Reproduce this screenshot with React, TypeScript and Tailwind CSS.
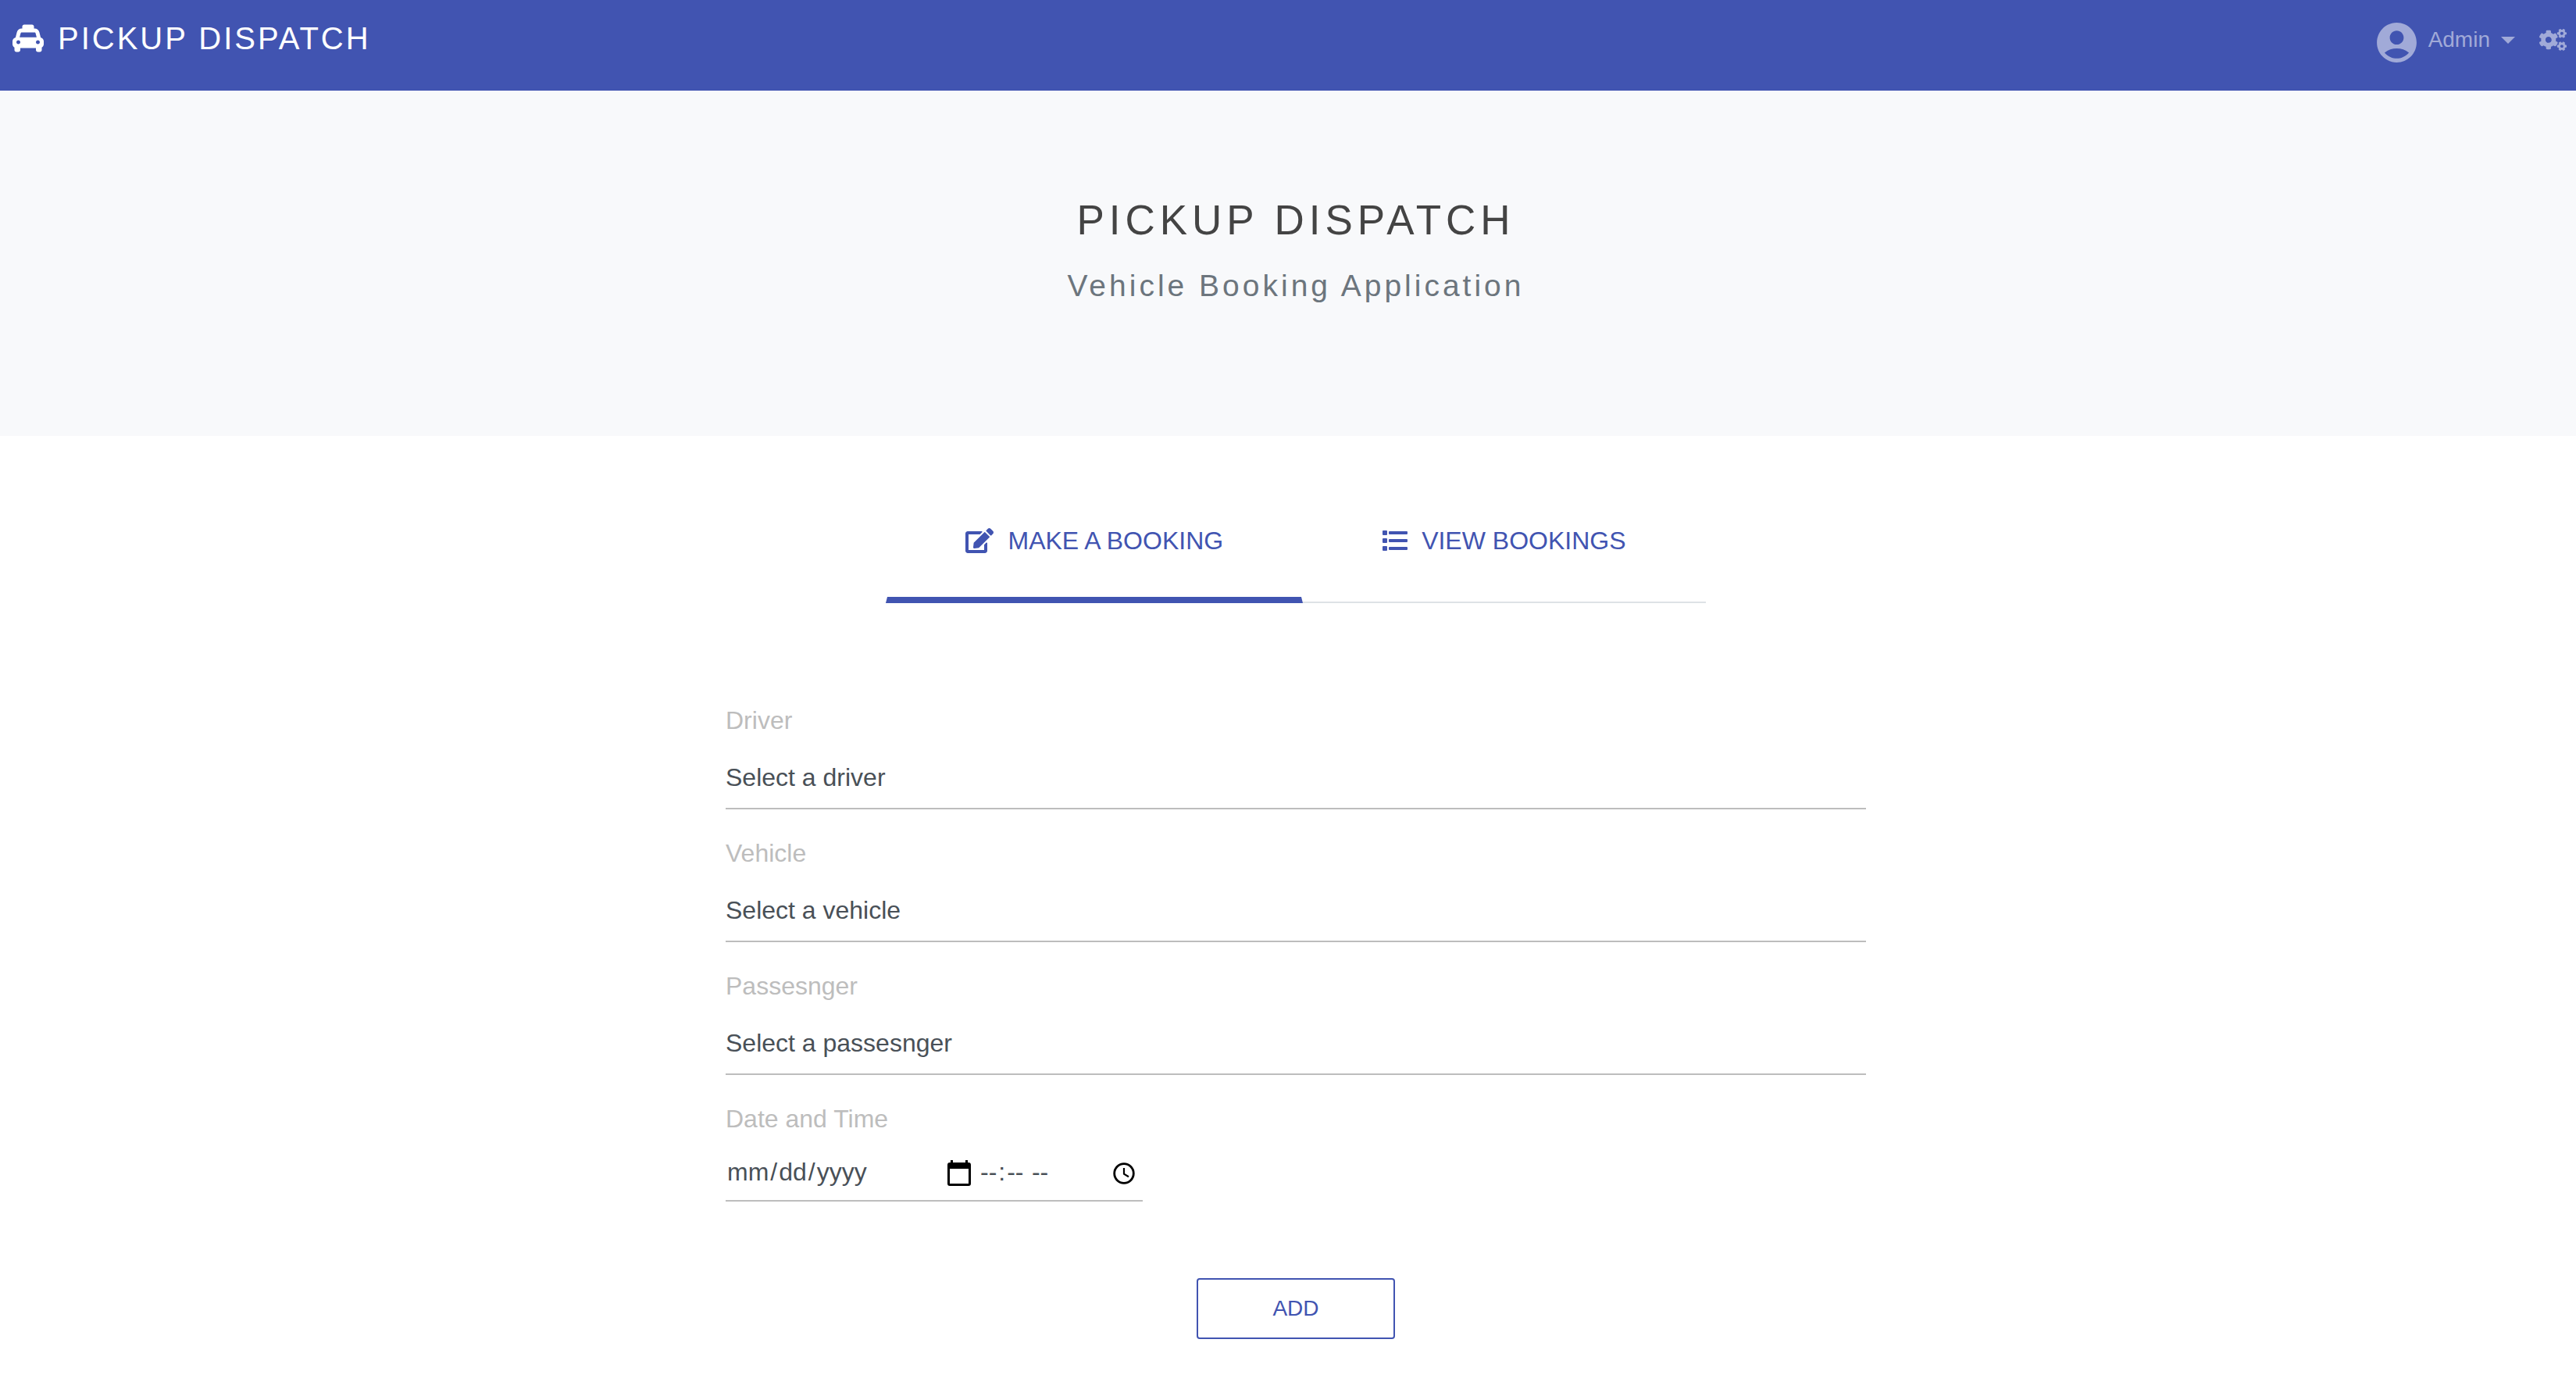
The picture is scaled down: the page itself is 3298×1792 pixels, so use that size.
import { FaCogs, FaEdit, FaTaxi } from 'react-icons/fa'
import { MdAccountCircle } from 'react-icons/md'

function Header() {
  return (
    <header className="flex h-[116px] items-start justify-between bg-[#4154b1] pt-6 pr-3 pl-4">
      <a href="#home" className="flex items-center gap-[18px] text-white">
        <FaTaxi className="size-10" />
        <span className="text-[40px] leading-[50px] tracking-[3px]">PICKUP DISPATCH</span>
      </a>
      <nav className="flex items-start text-[#a1aad8]">
        <button type="button" className="flex items-start gap-[10px] text-[28px]">
          <MdAccountCircle className="size-[61px]" />
          <span className="flex h-[54px] items-center gap-[14px]">
            Admin
            <svg viewBox="0 0 18 9" className="h-[9px] w-[18px]" fill="currentColor" aria-hidden="true">
              <path d="M0 0h18L9 9z" />
            </svg>
          </span>
        </button>
        <a href="#settings" aria-label="Settings" className="ml-[31px] flex h-[54px] items-center">
          <FaCogs className="h-7 w-[35px]" />
        </a>
      </nav>
    </header>
  )
}

function Hero() {
  return (
    <section className="bg-[#f8f9fb] pt-[130px] pb-[162px] pl-5 text-center">
      <h1 className="text-[53px] leading-[72px] tracking-[6px] text-[#444444]">PICKUP DISPATCH</h1>
      <p className="mt-[18px] text-[39px] leading-[60px] tracking-[4px] text-[#6c757d]">Vehicle Booking Application</p>
    </section>
  )
}

function ListIcon() {
  return (
    <svg viewBox="0 0 32 26" className="h-[26px] w-8" fill="currentColor" aria-hidden="true">
      {[0, 10, 20].map((y) => (
        <g key={y}>
          <rect x="0" y={y} width="6" height="6" rx="1" />
          <rect x="8" y={y + 1} width="24" height="4" rx="1" />
        </g>
      ))}
    </svg>
  )
}

const tab =
  '-mb-[2px] flex items-center gap-[18px] border-x-2 border-b-8 border-x-transparent px-[100px] pb-[52px] text-[32px] leading-10 text-[#4154b1]'

function Tabs() {
  return (
    <div role="tablist" className="flex border-b-2 border-[#dee2e6]">
      <button type="button" role="tab" aria-selected="true" className={`${tab} border-b-[#4154b1]`}>
        <FaEdit className="h-8 w-9" />
        MAKE A BOOKING
      </button>
      <button type="button" role="tab" aria-selected="false" className={`${tab} border-b-transparent`}>
        <ListIcon />
        VIEW BOOKINGS
      </button>
    </div>
  )
}

function SelectField({ id, label, placeholder }: { id: string; label: string; placeholder: string }) {
  return (
    <div className="flex flex-col gap-[14px]">
      <label htmlFor={id} className="text-[32px] leading-10 text-[#bdbdbd]">{label}</label>
      <select
        id={id}
        className="h-20 w-full appearance-none border-b-2 border-[#bdbdbd] bg-transparent text-[32px] text-[#495057] outline-none"
      >
        <option>{placeholder}</option>
      </select>
    </div>
  )
}

const dateInput =
  'h-[74px] w-full border-b-2 border-[#bdbdbd] outline-none [&::-webkit-calendar-picker-indicator]:opacity-0 [&::-webkit-datetime-edit-ampm-field]:px-[2px] [&::-webkit-datetime-edit-day-field]:px-[2px] [&::-webkit-datetime-edit-hour-field]:px-[2px] [&::-webkit-datetime-edit-minute-field]:px-[2px] [&::-webkit-datetime-edit-month-field]:px-[2px] [&::-webkit-datetime-edit-year-field]:px-[2px]'

function DateTimeField() {
  return (
    <div className="flex flex-col gap-3">
      <label htmlFor="date" className="text-[32px] leading-10 text-[#bdbdbd]">Date and Time</label>
      <div className="flex text-[32px] text-[#495057]">
        <div className="relative w-[324px]">
          <input id="date" type="date" className={dateInput} />
          <svg viewBox="0 0 30 33" className="pointer-events-none absolute top-[21px] right-[10px] h-[33px] w-[30px] text-black" aria-hidden="true">
            <path
              fill="currentColor"
              fillRule="evenodd"
              d="M4 0h3v3h16V0h3v3h1a3 3 0 0 1 3 3v24a3 3 0 0 1-3 3H3a3 3 0 0 1-3-3V6a3 3 0 0 1 3-3h1zM3 11v19h24V11z"
            />
          </svg>
        </div>
        <div className="relative w-[210px]">
          <input type="time" aria-label="Time" className={dateInput} />
          <svg viewBox="0 0 28 28" className="pointer-events-none absolute top-6 right-[10px] size-7 text-black" fill="none" stroke="currentColor" aria-hidden="true">
            <circle cx="14" cy="14" r="12.3" strokeWidth="2.8" />
            <path d="M14 7v7.600l6 3.600" strokeWidth="2.200" />
          </svg>
        </div>
      </div>
    </div>
  )
}

function BookingForm() {
  return (
    <form className="mt-[130px] flex w-full max-w-[1460px] flex-col gap-9">
      <SelectField id="driver" label="Driver" placeholder="Select a driver" />
      <SelectField id="vehicle" label="Vehicle" placeholder="Select a vehicle" />
      <SelectField id="passenger" label="Passesnger" placeholder="Select a passesnger" />
      <DateTimeField />
      <button
        type="submit"
        className="mt-[62px] h-[78px] w-[254px] self-center rounded-sm border-2 border-[#4154b1] text-[28px] text-[#4154b1]"
      >
        ADD
      </button>
    </form>
  )
}

export default function App() {
  return (
    <div className="min-h-screen bg-white font-['Liberation_Sans',Arial,sans-serif]">
      <Header />
      <Hero />
      <main className="flex flex-col items-center pt-[114px] pb-16 pl-5">
        <Tabs />
        <BookingForm />
      </main>
    </div>
  )
}
